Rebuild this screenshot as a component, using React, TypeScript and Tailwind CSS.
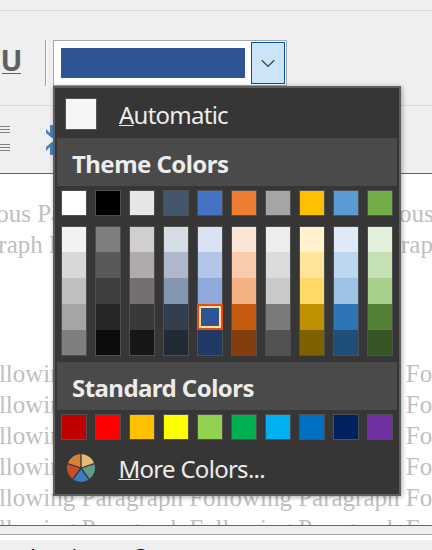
const theme = [
  ["bg-white", "bg-[#f2f2f2]", "bg-[#d8d8d8]", "bg-[#bfbfbf]", "bg-[#a5a5a5]", "bg-[#7f7f7f]"],
  ["bg-black", "bg-[#7f7f7f]", "bg-[#595959]", "bg-[#3f3f3f]", "bg-[#262626]", "bg-[#0c0c0c]"],
  ["bg-[#e7e6e6]", "bg-[#d0cece]", "bg-[#aeabaa]", "bg-[#757070]", "bg-[#3a3838]", "bg-[#171616]"],
  ["bg-[#44546a]", "bg-[#d6dce4]", "bg-[#adb9ca]", "bg-[#8496b0]", "bg-[#323f4f]", "bg-[#222a35]"],
  ["bg-[#4472c4]", "bg-[#d9e2f3]", "bg-[#b4c6e7]", "bg-[#8eaadb]", "bg-[#2f5496]", "bg-[#1f3864]"],
  ["bg-[#ed7d31]", "bg-[#fbe5d5]", "bg-[#f7cbac]", "bg-[#f4b183]", "bg-[#c55a11]", "bg-[#833c0b]"],
  ["bg-[#a5a5a5]", "bg-[#ededed]", "bg-[#dbdbdb]", "bg-[#c9c9c9]", "bg-[#7b7b7b]", "bg-[#525252]"],
  ["bg-[#ffc000]", "bg-[#fff2cc]", "bg-[#fee599]", "bg-[#ffd965]", "bg-[#bf9000]", "bg-[#7f6000]"],
  ["bg-[#5b9bd5]", "bg-[#deebf6]", "bg-[#bdd7ee]", "bg-[#9dc3e6]", "bg-[#2e75b5]", "bg-[#1f4e79]"],
  ["bg-[#70ad47]", "bg-[#e2efd9]", "bg-[#c5e0b3]", "bg-[#a8d08d]", "bg-[#538135]", "bg-[#375623]"],
];

const standard = [
  "bg-[#c00000]", "bg-[#ff0000]", "bg-[#ffc000]", "bg-[#ffff00]", "bg-[#92d050]",
  "bg-[#00b050]", "bg-[#00b0f0]", "bg-[#0070c0]", "bg-[#002060]", "bg-[#7030a0]",
];

function Swatches({ colors }: { colors: string[] }) {
  return (
    <div className="flex gap-2 pl-1">
      {colors.map((c, i) => (
        <div key={i} className={`size-[26px] border border-[#505050] ${c}`} />
      ))}
    </div>
  );
}

function Heading({ children }: { children: string }) {
  return (
    <div className="flex h-12 items-center bg-[#4a4a4a] pt-[3px] pl-[15px] text-[24px] leading-[34px] font-bold tracking-[-0.55px] text-[#ececec]">
      {children}
    </div>
  );
}

function Wheel() {
  const fills = ["#dfbd78", "#5f9c86", "#3b7dc4", "#ca4d2e", "#dc8133"];
  const pt = (deg: number) => {
    const a = ((deg - 90) * Math.PI) / 180;
    return `${14 + 14 * Math.cos(a)} ${14 + 14 * Math.sin(a)}`;
  };
  return (
    <svg width="28" height="28" viewBox="0 0 28 28" className="shrink-0">
      {fills.map((f, i) => (
        <path key={f} d={`M14 14L${pt(i * 72)}A14 14 0 0 1 ${pt(i * 72 + 72)}Z`} fill={f} />
      ))}
      {fills.map((f, i) => (
        <path key={f} d={`M14 14L${pt(i * 72)}`} stroke="#363636" strokeWidth="1.3" />
      ))}
    </svg>
  );
}

function Lines() {
  return (
    <div className="flex w-[10px] flex-col gap-[2px]">
      <div className="h-px bg-[#808080]" />
      <div className="h-px bg-[#808080]" />
      <div className="h-px bg-[#808080]" />
    </div>
  );
}

function ColorMenu() {
  return (
    <div className="absolute top-[86px] left-[53px] h-[410px] w-[348px] border-2 border-[#5e5e5e] bg-[#363636] px-[2px] font-['Noto_Sans','Open_Sans',sans-serif] text-[24px] text-[#ececec] shadow-[1px_1px_5px_rgba(0,0,0,0.35)]">
      <div className="flex h-[50px] items-start pt-[10px] pl-2">
        <div className="size-8 shrink-0 border border-[#555555] bg-[#f6f6f6]" />
        <div className="ml-[22px] leading-[34px] tracking-[-0.75px]">
          <u className="decoration-1 underline-offset-[1px]">A</u>utomatic
        </div>
      </div>
      <Heading>Theme Colors</Heading>
      <div className="pt-1">
        <Swatches colors={theme.map((c) => c[0])} />
      </div>
      <div className="mt-[10px] mb-[6px] flex gap-2 pl-1">
        {theme.map((col, i) => (
          <div key={i} className="grid h-[130px] w-[26px] grid-rows-[25px_26px_26px_26px_25px] border border-[#505050]">
            {col.slice(1).map((c, j) =>
              i === 4 && j === 3 ? (
                <div key={j} className="-mx-px border-2 border-[#f04a12]">
                  <div className={`size-full border-2 border-[#ffe294] ${c}`} />
                </div>
              ) : (
                <div key={j} className={c} />
              ),
            )}
          </div>
        ))}
      </div>
      <Heading>Standard Colors</Heading>
      <div className="pt-1">
        <Swatches colors={standard} />
      </div>
      <div className="flex h-[54px] items-center pt-px pl-[9.5px]">
        <Wheel />
        <span className="mt-[3px] ml-[24px] leading-[34px] tracking-[-0.72px]">
          <u className="decoration-1 underline-offset-[1px]">M</u>ore Colors...
        </span>
      </div>
    </div>
  );
}

export default function App() {
  const following = "Following Paragraph Following Paragraph Following Paragraph";
  return (
    <div className="relative h-[550px] w-[432px] overflow-hidden bg-[#efefef]">
      <div className="h-[11px] border-b border-[#dadada]" />
      <div className="flex h-[95px] border-b border-[#dadada] pt-[29px]">
        <div className="h-[46px] w-[45px] pl-[2px] pt-[5px]">
          <div className="flex h-[29px] w-[19px] items-end justify-center border-b border-[#606060] font-['Open_Sans',sans-serif] text-[29px] leading-[27px] font-bold text-[#606060]">U</div>
        </div>
        <div className="h-[46px] w-2 border-l border-[#a0a0a0]">
          <div className="h-full w-px bg-white" />
        </div>
        <div className="flex h-[46px] w-[234px] items-center justify-between border border-[#a6a7aa] bg-white pr-px pl-[7px]">
          <div className="h-[30px] w-[184px] bg-[#2f5496]" />
          <div className="flex h-[42px] w-[34px] items-center justify-center border border-[#005499] bg-[#cce4f7]">
            <svg width="14" height="9" viewBox="0 0 14 9" fill="none" stroke="#404040" strokeWidth="1.3">
              <path d="M0.8 1.2L7 7.4L13.2 1.2" />
            </svg>
          </div>
        </div>
      </div>
      <div className="flex h-[68px] border-b border-[#656565] pt-5">
        <div className="flex flex-col gap-[11px]">
          <Lines />
          <Lines />
        </div>
        <svg width="16" height="30" viewBox="0 0 16 30" className="-mt-px ml-9" fill="#4683bd">
          <path d="M4 0H12V8L16 4V8L10 13H6L0 8V4L4 8Z" />
          <path d="M4 30H12V22L16 26V22L10 17H6L0 22V26L4 22Z" />
        </svg>
      </div>
      <div className="h-[352px] overflow-hidden border-b border-[#656565] bg-white font-['Liberation_Serif',serif] text-[25px] leading-[31px] whitespace-nowrap text-[#bfbfbf]">
        <div className="mt-[24px] ml-[-56.5px]">Previous Paragraph Previous Paragraph Previous Paragraph</div>
        <div className="ml-[-58.6px]">Paragraph Previous Paragraph Previous Paragraph</div>
        <div className="mt-[98px] ml-[-27.5px]">
          {[0, 1, 2, 3, 4, 5].map((n) => (
            <div key={n}>{following}</div>
          ))}
        </div>
      </div>
      <div className="h-[9px] border-b border-[#a7a7ad]" />
      <div className="h-[5px] bg-white" />
      <div className="h-[10px] overflow-hidden pt-[5px] font-['Noto_Sans',sans-serif] text-[22px] leading-[22px] tracking-[0.6px] whitespace-nowrap text-black">
        <div className="-ml-[0px]">redominant S</div>
      </div>
      <ColorMenu />
    </div>
  );
}
